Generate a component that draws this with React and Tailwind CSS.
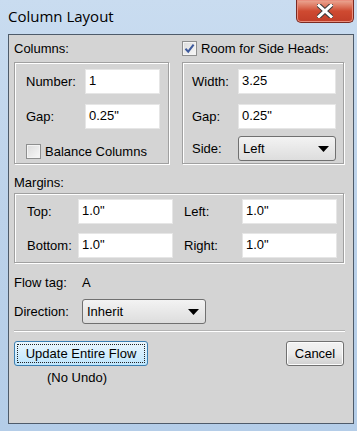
import React from 'react'

const font = { fontFamily: '"Liberation Sans", Arial, sans-serif' }

function Group({ className = '', children }) {
  return (
    <div className={`border border-[#a0a0a0] shadow-[inset_1px_1px_0_#ffffff,1px_1px_0_#ffffff] ${className}`}>
      {children}
    </div>
  )
}

function Field({ value, className = '' }) {
  return (
    <div className={`h-[25px] bg-white border border-[#e6e6e6] flex items-center pl-[3px] pb-[2px] text-[13px] text-black ${className}`}>
      {value}
    </div>
  )
}

function Select({ value, className = '' }) {
  return (
    <div className={`h-[25px] rounded-[3px] border border-[#707070] bg-gradient-to-b from-[#f3f3f3] to-[#dddddd] flex items-center justify-between pl-[4px] pr-[6px] text-[13px] text-black ${className}`}>
      <span>{value}</span>
      <svg width="11" height="6" viewBox="0 0 11 6"><path d="M0 0h11L5.5 6z" fill="#000" /></svg>
    </div>
  )
}

function Checkbox({ checked }) {
  return (
    <div className="w-[15px] h-[15px] border border-[#8e8f8f] bg-gradient-to-br from-[#dcdcdc] to-[#f8f8f8] shadow-[inset_0_0_0_1px_#f4f4f4] flex items-center justify-center">
      {checked && (
        <svg width="11" height="11" viewBox="0 0 11 11">
          <path d="M1.5 5.8 4.2 8.6 9.6 1.6" fill="none" stroke="#3d5a9c" strokeWidth="2" />
        </svg>
      )}
    </div>
  )
}

function Row({ label, labelW, children, className = '' }) {
  return (
    <div className={`flex items-center ${className}`}>
      <div className="shrink-0 text-[13px] text-black" style={{ width: labelW }}>{label}</div>
      {children}
    </div>
  )
}

export default function App() {
  return (
    <div className="w-[357px] h-[431px] flex flex-col bg-gradient-to-b from-[#c9dcf0] via-[#bcd2ea] to-[#b4cde8] overflow-hidden" style={font}>
      <div className="h-[34px] flex items-start justify-between shrink-0">
        <div className="pl-[8px] pt-[5px] text-[15px] text-black" style={{ fontFamily: '"Open Sans", "Noto Sans", sans-serif' }}>
          Column Layout
        </div>
        <div className="mr-[3px] w-[58px] h-[23px] rounded-b-[5px] border border-t-0 border-[#7a2a22] bg-gradient-to-b from-[#eba996] via-[#cf4a31] to-[#c13d28] flex items-center justify-center shadow-[inset_0_0_0_1px_#e98f7e]">
          <svg width="16" height="14" viewBox="0 0 16 14">
            <path d="M2 1.5 14 12.5M14 1.5 2 12.5" stroke="#3a3a3a" strokeWidth="5" strokeLinecap="square" />
            <path d="M2 1.5 14 12.5M14 1.5 2 12.5" stroke="#ffffff" strokeWidth="3" strokeLinecap="square" />
          </svg>
        </div>
      </div>

      <div className="ml-[8px] mr-[3px] mb-[7px] flex-1 border border-[#4e5b6a] bg-[#d4d4d4] pl-[5px] pt-[5px] text-[13px] text-black">
        <div className="flex gap-[13px]">
          <div className="w-[155px]">
            <div className="h-[17px] flex items-center">Columns:</div>
            <Group className="mt-[5px] h-[102px] pl-[11px] pt-[6px]">
              <Row label="Number:" labelW={59}>
                <Field value="1" className="w-[75px]" />
              </Row>
              <Row label="Gap:" labelW={59} className="mt-[10px]">
                <Field value={'0.25"'} className="w-[75px]" />
              </Row>
              <div className="flex items-center gap-[4px] mt-[13px]">
                <Checkbox />
                <span>Balance Columns</span>
              </div>
            </Group>
          </div>
          <div className="w-[162px]">
            <div className="h-[17px] flex items-center gap-[4px]">
              <Checkbox checked />
              <span>Room for Side Heads:</span>
            </div>
            <Group className="mt-[5px] h-[102px] pl-[9px] pt-[6px]">
              <Row label="Width:" labelW={46}>
                <Field value="3.25" className="w-[98px]" />
              </Row>
              <Row label="Gap:" labelW={46} className="mt-[10px]">
                <Field value={'0.25"'} className="w-[98px]" />
              </Row>
              <Row label="Side:" labelW={46} className="mt-[7px]">
                <Select value="Left" className="w-[98px]" />
              </Row>
            </Group>
          </div>
        </div>

        <div className="mt-[10px] h-[17px] flex items-center">Margins:</div>
        <Group className="mt-[2px] w-[330px] h-[70px] pl-[12px] pt-[5px]">
          <div className="flex">
            <Row label="Top:" labelW={51}><Field value={'1.0"'} className="w-[95px]" /></Row>
            <Row label="Left:" labelW={58} className="ml-[11px]"><Field value={'1.0"'} className="w-[95px]" /></Row>
          </div>
          <div className="flex mt-[9px]">
            <Row label="Bottom:" labelW={51}><Field value={'1.0"'} className="w-[95px]" /></Row>
            <Row label="Right:" labelW={58} className="ml-[11px]"><Field value={'1.0"'} className="w-[95px]" /></Row>
          </div>
        </Group>

        <Row label="Flow tag:" labelW={68} className="mt-[12px] h-[16px]">
          <span>A</span>
        </Row>
        <Row label="Direction:" labelW={68} className="mt-[8px]">
          <Select value="Inherit" className="w-[124px] h-[24px]" />
        </Row>

        <div className="mt-[6px] mr-[8px] h-[2px] border-t border-[#b4b4b4] border-b border-b-white" />

        <div className="mt-[9px] flex justify-between pr-[9px]">
          <div className="flex flex-col items-center w-[134px]">
            <div className="w-[134px] h-[25px] rounded-[3px] border border-[#3c7fb1] bg-gradient-to-b from-[#eaf6fd] to-[#bee6fd] p-[2px]">
              <div className="h-full border border-dotted border-[#222] flex items-center justify-center text-[13px]">
                Update Entire Flow
              </div>
            </div>
            <div className="mt-[2px] pr-[8px]">(No Undo)</div>
          </div>
          <div className="w-[58px] h-[25px] rounded-[3px] border border-[#707070] bg-gradient-to-b from-[#f2f2f2] via-[#ebebeb] to-[#cfcfcf] flex items-center justify-center shadow-[inset_0_0_0_1px_#fcfcfc]">
            Cancel
          </div>
        </div>
      </div>
    </div>
  )
}
